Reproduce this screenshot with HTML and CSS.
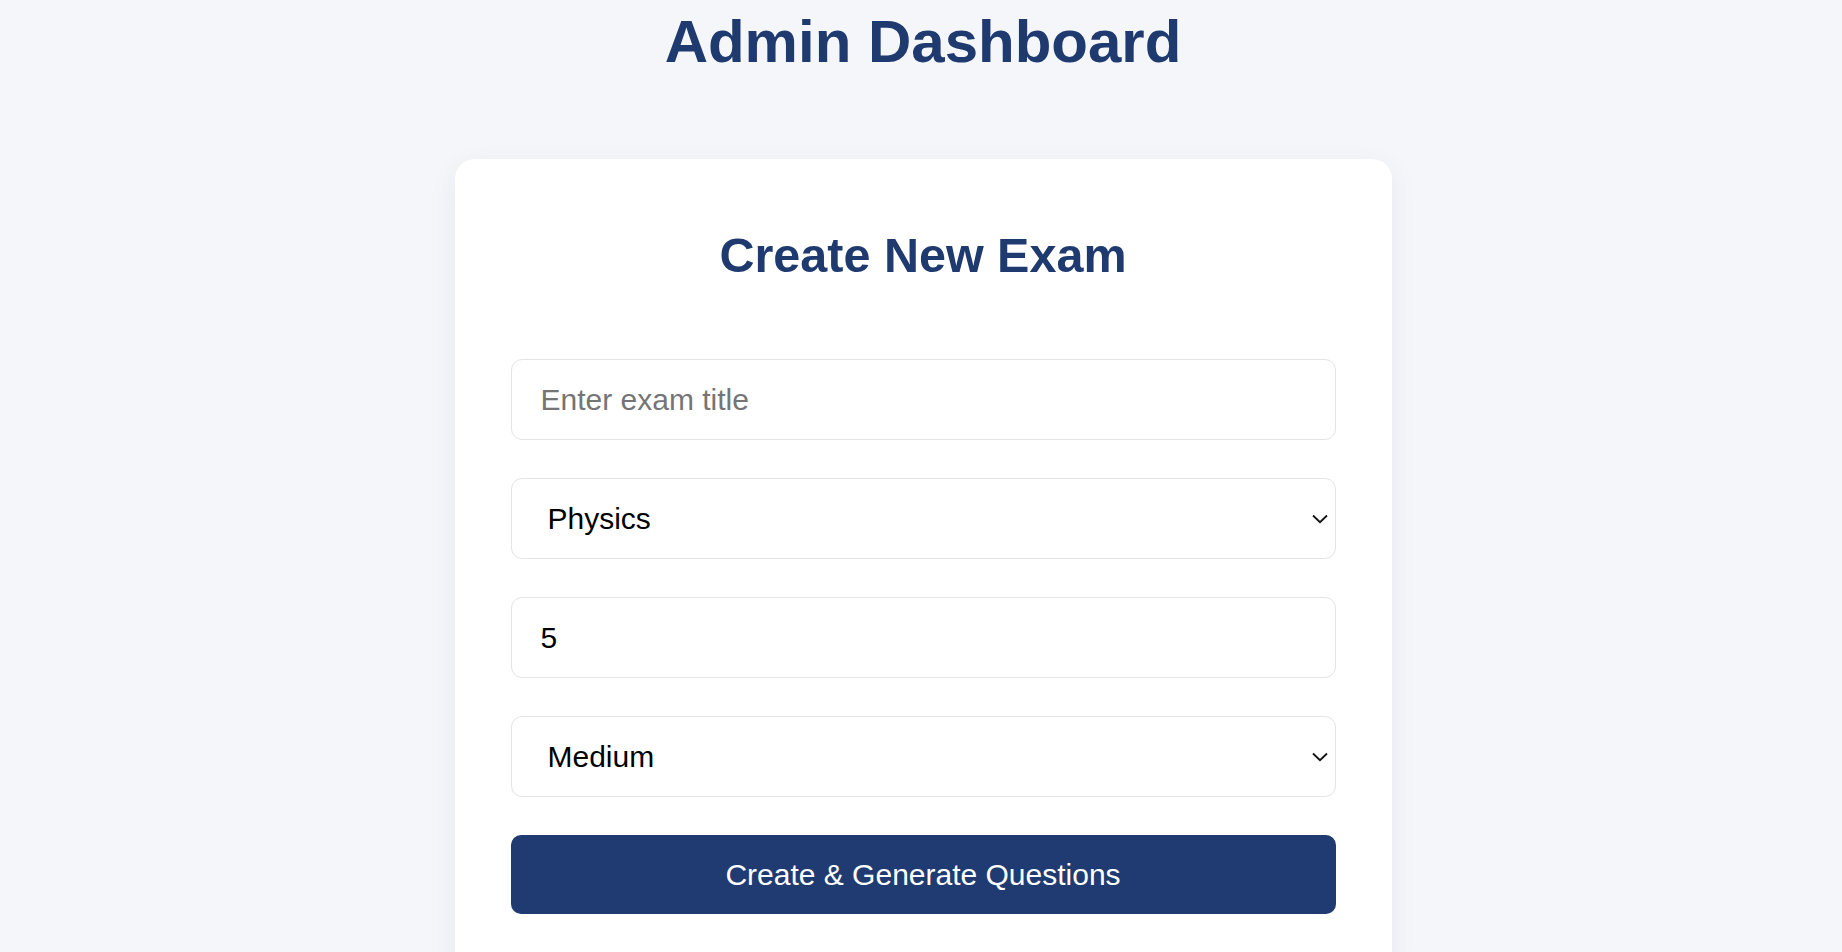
FILE: index.html
```html
<!DOCTYPE html>
<html lang="en">
<head>
<meta charset="utf-8">
<title>Admin Dashboard</title>
<link rel="stylesheet" href="styles.css">
</head>
<body>
<div class="page">
  <h1 class="title">Admin Dashboard</h1>
  <div class="card">
    <h2 class="card-title">Create New Exam</h2>
    <form class="exam-form">
      <input class="field" type="text" placeholder="Enter exam title">
      <div class="select-wrap">
        <select class="field select">
          <option>Physics</option>
          <option>Chemistry</option>
          <option>Mathematics</option>
        </select>
        <svg class="chevron" width="16" height="10" viewBox="0 0 16 10"><path d="M1 1.5 L8 8.2 L15 1.5" fill="none" stroke="#111" stroke-width="1.8"/></svg>
      </div>
      <input class="field" type="number" value="5">
      <div class="select-wrap">
        <select class="field select">
          <option>Easy</option>
          <option selected>Medium</option>
          <option>Hard</option>
        </select>
        <svg class="chevron" width="16" height="10" viewBox="0 0 16 10"><path d="M1 1.5 L8 8.2 L15 1.5" fill="none" stroke="#111" stroke-width="1.8"/></svg>
      </div>
      <button class="submit" type="button">Create &amp; Generate Questions</button>
    </form>
  </div>
</div>
</body>
</html>
```
FILE: styles.css
```css
html, body {
  margin: 0;
  padding: 0;
}
body {
  background: #f5f6fa;
  font-family: "Liberation Sans", Arial, sans-serif;
  overflow: hidden;
}
.page {
  display: flex;
  flex-direction: column;
  align-items: center;
  padding-top: 7px;
}
.title {
  margin: 0;
  font-size: 60px;
  line-height: 69px;
  font-weight: 700;
  color: #1f3a6f;
  transform: translateX(2px);
}
.card {
  margin-top: 83px;
  width: 825px;
  padding: 56px 56px 60px;
  background: #ffffff;
  border-radius: 20px;
  box-shadow: 0 8px 30px rgba(20, 30, 70, 0.06);
  transform: translateX(2px);
}
.card-title {
  margin: 12px 0 76px;
  text-align: center;
  font-size: 48.5px;
  line-height: 56px;
  font-weight: 700;
  color: #1f3a6f;
}
.exam-form {
  display: flex;
  flex-direction: column;
  gap: 38px;
}
.field {
  box-sizing: border-box;
  width: 100%;
  height: 81px;
  padding: 0 29px;
  border: 1px solid #e4e4e6;
  border-radius: 11px;
  background: #ffffff;
  font-family: "Liberation Sans", Arial, sans-serif;
  font-size: 30px;
  color: #000000;
  outline: none;
}
.field::placeholder {
  color: #757575;
}
.field[type="number"] {
  -moz-appearance: textfield;
}
.field[type="number"]::-webkit-inner-spin-button,
.field[type="number"]::-webkit-outer-spin-button {
  -webkit-appearance: none;
  margin: 0;
}
.select-wrap {
  position: relative;
}
.select {
  -webkit-appearance: none;
  appearance: none;
  padding-left: 36px;
  display: block;
}
.chevron {
  position: absolute;
  right: 8px;
  top: 36px;
  pointer-events: none;
}
.submit {
  height: 79px;
  border: none;
  border-radius: 10px;
  background: #1f3b71;
  color: #ffffff;
  font-family: "Liberation Sans", Arial, sans-serif;
  font-size: 30px;
  cursor: pointer;
}
```
